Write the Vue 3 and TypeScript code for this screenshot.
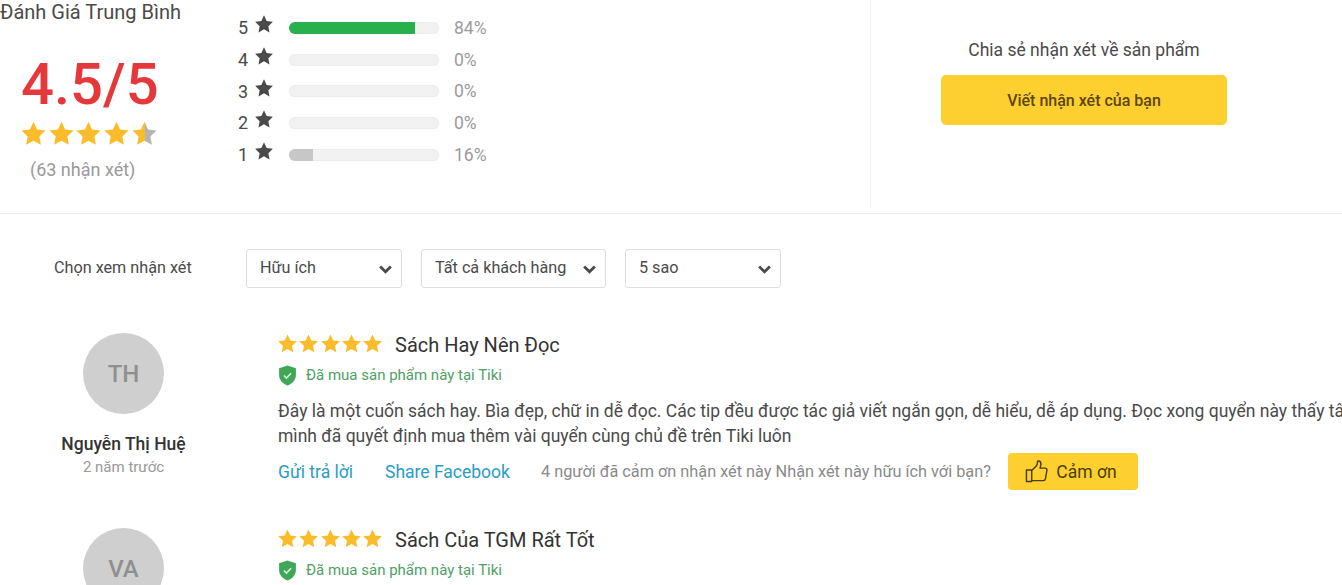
<script setup lang="ts">
const starPath = 'M12 1.6l3.2 6.9 7.5.9-5.5 5.2 1.4 7.5L12 18.4l-6.6 3.7 1.4-7.5L1.300 9.400l7.500-.9z'
const histogram = [
  { stars: 5, pct: 84, cls: 'good' },
  { stars: 4, pct: 0, cls: '' },
  { stars: 3, pct: 0, cls: '' },
  { stars: 2, pct: 0, cls: '' },
  { stars: 1, pct: 16, cls: 'bad' },
]
const filters = [
  { label: 'Hữu ích', cls: 'f-a' },
  { label: 'Tất cả khách hàng', cls: 'f-b' },
  { label: '5 sao', cls: 'f-a' },
]
const reviews = [
  {
    initials: 'TH',
    name: 'Nguyễn Thị Huệ',
    time: '2 năm trước',
    title: 'Sách Hay Nên Đọc',
    lines: [
      'Đây là một cuốn sách hay. Bìa đẹp, chữ in dễ đọc. Các tip đều được tác giả viết ngắn gọn, dễ hiểu, dễ áp dụng. Đọc xong quyển này thấy tâm',
      'mình đã quyết định mua thêm vài quyển cùng chủ đề trên Tiki luôn',
    ],
    thanks: '4 người đã cảm ơn nhận xét này',
  },
  {
    initials: 'VA',
    name: '',
    time: '',
    title: 'Sách Của TGM Rất Tốt',
    lines: [],
    thanks: '',
  },
]
</script>

<template>
  <div class="page">
    <section class="summary">
      <div class="summary-main">
        <div class="average">
          <h2 class="average-title">Đánh Giá Trung Bình</h2>
          <div class="score">4.5/5</div>
          <div class="score-stars">
            <svg v-for="n in 5" :key="n" class="score-star" viewBox="0 0 24 24">
              <defs v-if="n === 5">
                <linearGradient id="half-star">
                  <stop offset="52%" stop-color="#fbbc2c" />
                  <stop offset="52%" stop-color="#b4b4b4" />
                </linearGradient>
              </defs>
              <path :d="starPath" :fill="n === 5 ? 'url(#half-star)' : '#fbbc2c'" />
            </svg>
          </div>
          <div class="score-count">(63 nhận xét)</div>
        </div>
        <div class="histogram">
          <div v-for="row in histogram" :key="row.stars" class="hist-row">
            <span class="hist-num">{{ row.stars }}</span>
            <svg class="hist-star" viewBox="0 0 24 24"><path :d="starPath" fill="#4a4a4a" /></svg>
            <div class="hist-track">
              <div class="hist-fill" :class="row.cls" :style="{ width: row.pct + '%' }"></div>
            </div>
            <span class="hist-pct">{{ row.pct }}%</span>
          </div>
        </div>
      </div>
      <div class="share">
        <p class="share-text">Chia sẻ nhận xét về sản phẩm</p>
        <button class="write-btn">Viết nhận xét của bạn</button>
      </div>
    </section>

    <section class="filters">
      <span class="filters-label">Chọn xem nhận xét</span>
      <div v-for="f in filters" :key="f.label" class="select" :class="f.cls">
        <span>{{ f.label }}</span>
        <svg class="chevron" viewBox="0 0 14 10">
          <path d="M2 2.200l5 5 5-5" fill="none" stroke="#4a4a4a" stroke-width="2.600" />
        </svg>
      </div>
    </section>

    <article v-for="r in reviews" :key="r.initials" class="review">
      <div class="author">
        <div class="avatar">{{ r.initials }}</div>
        <div v-if="r.name" class="author-name">{{ r.name }}</div>
        <div v-if="r.time" class="author-time">{{ r.time }}</div>
      </div>
      <div class="review-body">
        <div class="review-head">
          <div class="review-stars">
            <svg v-for="n in 5" :key="n" class="review-star" viewBox="0 0 24 24">
              <path :d="starPath" fill="#fbbc2c" />
            </svg>
          </div>
          <h3 class="review-title">{{ r.title }}</h3>
        </div>
        <div class="verified">
          <svg class="shield" viewBox="0 0 18 20">
            <path d="M9 .5l8 2.700v6.300c0 4.800-3.300 8.300-8 10-4.700-1.700-8-5.200-8-10V3.200z" fill="#3fa757" />
            <path d="M5.600 10l2.400 2.400 4.400-4.600" fill="none" stroke="#d8f2dd" stroke-width="1.500" />
          </svg>
          <span>Đã mua sản phẩm này tại Tiki</span>
        </div>
        <p v-for="line in r.lines" :key="line" class="review-line">{{ line }}</p>
        <div v-if="r.thanks" class="actions">
          <a class="action-link reply">Gửi trả lời</a>
          <a class="action-link share-link">Share Facebook</a>
          <span class="thanks">{{ r.thanks }} Nhận xét này hữu ích với bạn?</span>
          <button class="thanks-btn">
            <svg class="thumb" viewBox="0 0 24 24">
              <path d="M7 10.500H1.500V22.500H7zM7 11l4.500-4.500c1-1.200 1.500-2.800 1.500-4.200 0-1 .7-1.500 1.500-1.300 1.600.4 2.300 2.200 2 4.200l-.8 3.300h5.300c1.200 0 2.100 1 1.900 2.200l-1.600 9c-.2 1-1 1.800-2.100 1.800H7" fill="none" stroke="#4a3d0c" stroke-width="1.500" stroke-linejoin="round" />
            </svg>
            <span>Cảm ơn</span>
          </button>
        </div>
      </div>
    </article>
  </div>
</template>

<style>
html, body {
  margin: 0;
  height: 585px;
  overflow: hidden;
  background: #fff;
}
</style>

<style scoped>
.page {
  width: 1342px;
  height: 585px;
  overflow: hidden;
  font-family: Roboto, "Noto Sans", sans-serif;
  color: #4a4a4a;
  background: #fff;
}
.summary {
  display: flex;
  height: 213px;
  border-bottom: 1px solid #f0f0f0;
  box-sizing: content-box;
}
.summary-main {
  display: flex;
  width: 870px;
  height: 208px;
  border-right: 1px solid #f0f0f0;
  flex: none;
}
.average {
  width: 238px;
  flex: none;
}
.average-title {
  margin: 0;
  font-size: 20px;
  font-weight: 400;
  line-height: 24px;
  color: #4a4a4a;
  white-space: nowrap;
}
.score {
  margin: 30px 0 0 21px;
  font-size: 58px;
  line-height: 60px;
  font-weight: 500;
  color: #e5383b;
}
.score-stars {
  display: flex;
  margin: 6px 0 0 20px;
  gap: 0.700px;
}
.score-star {
  width: 27px;
  height: 27px;
}
.score-count {
  margin: 12px 0 0 30px;
  font-size: 18px;
  line-height: 22px;
  color: #999;
}
.histogram {
  padding-top: 12px;
}
.hist-row {
  display: flex;
  align-items: center;
  height: 31.700px;
}
.hist-num {
  width: 16px;
  font-size: 18px;
  color: #4a4a4a;
}
.hist-star {
  width: 20px;
  height: 20px;
  margin-top: -7px;
}
.hist-track {
  width: 150px;
  height: 12px;
  margin-left: 15px;
  border-radius: 6px;
  background: #f2f2f2;
  box-shadow: inset 0 0 0 1px #ececec;
  overflow: hidden;
}
.hist-fill {
  height: 100%;
}
.hist-fill.good {
  background: #27b04b;
}
.hist-fill.bad {
  background: #c7c7c7;
}
.hist-pct {
  margin-left: 15px;
  font-size: 17.500px;
  color: #9b9b9b;
}
.share {
  width: 426px;
  display: flex;
  flex-direction: column;
  align-items: center;
  padding-top: 38px;
  box-sizing: border-box;
}
.share-text {
  margin: 0;
  font-size: 17.500px;
  line-height: 24px;
  color: #4a4a4a;
}
.write-btn {
  width: 286px;
  height: 50px;
  margin-top: 13px;
  border: none;
  border-radius: 5px;
  background: #fdd02f;
  color: #5c4510;
  font: 500 16px Roboto, sans-serif;
}
.filters {
  display: flex;
  align-items: center;
  padding: 35px 0 0 54px;
  height: 39px;
}
.filters-label {
  width: 192px;
  margin-top: -2px;
  font-size: 16.200px;
  color: #4a4a4a;
}
.select {
  display: flex;
  align-items: center;
  justify-content: space-between;
  box-sizing: border-box;
  height: 39px;
  margin-right: 19px;
  padding: 0 8px 2px 13px;
  border: 1px solid #dedede;
  border-radius: 3px;
  font-size: 16.200px;
  color: #4a4a4a;
}
.f-a {
  width: 156px;
}
.f-b {
  width: 185px;
}
.chevron {
  width: 15px;
  height: 11px;
  margin-top: 3px;
}
.review {
  display: flex;
  height: 195px;
}
.filters + .review {
  margin-top: 45px;
}
.author {
  width: 247px;
  flex: none;
  display: flex;
  flex-direction: column;
  align-items: center;
}
.avatar {
  width: 81px;
  height: 81px;
  border-radius: 50%;
  background: #cfcfcf;
  color: #8f8f8f;
  font-size: 24px;
  font-weight: 500;
  display: flex;
  align-items: center;
  justify-content: center;
}
.author-name {
  margin-top: 19px;
  font-size: 17.500px;
  line-height: 22px;
  font-weight: 500;
  color: #333;
  white-space: nowrap;
}
.author-time {
  margin-top: 3px;
  font-size: 15px;
  line-height: 18px;
  color: #999;
}
.review-body {
  margin-left: 31px;
  min-width: 0;
  flex: 1;
}
.review-head {
  display: flex;
  align-items: center;
  height: 24px;
}
.review-stars {
  display: flex;
  width: 118px;
  flex: none;
  margin-left: -1px;
}
.review-star {
  width: 21px;
  height: 21px;
  margin-right: 0.300px;
  margin-top: -4px;
}
.review-title {
  margin: 0;
  font-size: 20px;
  line-height: 24px;
  font-weight: 400;
  color: #333;
  white-space: nowrap;
}
.verified {
  display: flex;
  align-items: center;
  margin-top: 6px;
  height: 24px;
  font-size: 15px;
  color: #4f9f63;
}
.shield {
  width: 19px;
  height: 21px;
  margin-right: 9px;
}
.review-line {
  margin: 0;
  font-size: 17.500px;
  line-height: 25px;
  color: #4a4a4a;
  white-space: nowrap;
}
.review-line:first-of-type {
  margin-top: 12px;
}
.actions {
  display: flex;
  align-items: center;
  margin-top: 4px;
  height: 37px;
}
.action-link {
  font-size: 17.500px;
  color: #2a9dc4;
}
.reply {
  width: 107px;
}
.share-link {
  width: 156px;
}
.thanks {
  width: 467px;
  font-size: 16.300px;
  color: #8a8a8a;
  white-space: nowrap;
}
.thanks-btn {
  display: flex;
  align-items: center;
  justify-content: center;
  gap: 8px;
  width: 130px;
  height: 37px;
  padding-right: 10px;
  border: none;
  border-radius: 4px;
  background: #fdd02f;
  color: #4a3d0c;
  font: 400 17.500px Roboto, sans-serif;
}
.thumb {
  width: 23px;
  height: 23px;
}
</style>
